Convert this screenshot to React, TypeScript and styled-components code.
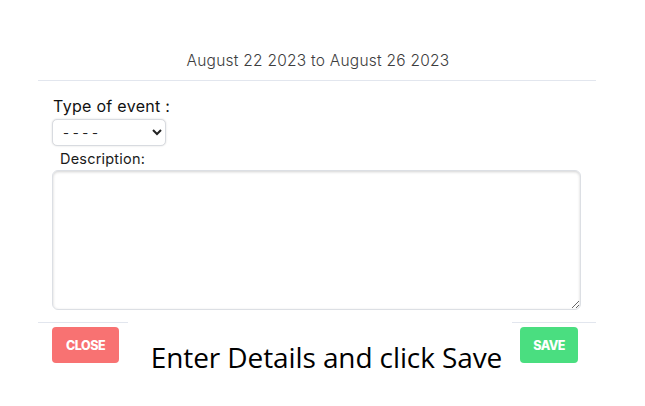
import React from 'react';
import styled, { createGlobalStyle } from 'styled-components';

const GlobalStyle = createGlobalStyle`
  html, body {
    margin: 0;
    padding: 0;
    background: #ffffff;
  }
  body {
    font-family: 'Poppins', 'Inter', 'Noto Sans', sans-serif;
  }
`;

function App() {
  return (
    <Page>
      <GlobalStyle />
      <Modal>
        <Header>August 22 2023 to August 26 2023</Header>
        <Body>
          <Label>Type of event :</Label>
          <Select defaultValue="">
            <option value="">- - - -</option>
            <option value="meeting">Meeting</option>
            <option value="holiday">Holiday</option>
          </Select>
          <SubLabel>Description:</SubLabel>
          <TextArea />
        </Body>
        <Footer>
          <Button $tone="close">Close</Button>
          <Button $tone="save">Save</Button>
          <Caption>Enter Details and click Save</Caption>
        </Footer>
      </Modal>
    </Page>
  );
}

export default App;

const Page = styled.div`
  width: 645px;
  height: 406px;
  padding-top: 40px;
  box-sizing: border-box;
  overflow: hidden;
`;

const Modal = styled.div`
  width: 558px;
  margin-left: 38px;
  display: flex;
  flex-direction: column;
`;

const Header = styled.div`
  height: 40px;
  display: flex;
  align-items: center;
  justify-content: center;
  padding-left: 2px;
  border-bottom: 1px solid #e2e6ee;
  font-family: 'Inter', sans-serif;
  font-weight: 300;
  font-size: 15.5px;
  letter-spacing: 0.25px;
  color: #3d3d3d;
`;

const Body = styled.div`
  display: flex;
  flex-direction: column;
  align-items: flex-start;
  padding: 14px 15px 12px 14px;
`;

const Label = styled.label`
  font-family: 'Inter', sans-serif;
  font-size: 16px;
  line-height: 23px;
  color: #111;
  padding-left: 1px;
  letter-spacing: 0.3px;
`;

const Select = styled.select`
  width: 114px;
  height: 27px;
  margin-top: 1px;
  border: 1px solid #d8dbe0;
  border-radius: 5px;
  box-shadow: 0 0 2px rgba(0, 0, 0, 0.15);
  background: #fff;
  font-family: 'Inter', sans-serif;
  font-size: 13px;
  color: #222;
  padding: 0 6px;
`;

const SubLabel = styled.label`
  font-family: 'Inter', sans-serif;
  font-size: 14.5px;
  line-height: 20px;
  color: #1a1a1a;
  margin-top: 3px;
  padding-left: 8px;
  letter-spacing: 0.2px;
`;

const TextArea = styled.textarea`
  width: 529px;
  height: 140px;
  margin-top: 1px;
  box-sizing: border-box;
  border: 1px solid #dcdfe4;
  border-radius: 6px;
  box-shadow: inset 0 1px 3px rgba(0, 0, 0, 0.18);
  outline: none;
  resize: both;
`;

const Footer = styled.div`
  position: relative;
  display: flex;
  justify-content: space-between;
  padding: 4px 18px 0 14px;
  border-top: 1px solid #e2e6ee;
  height: 48px;
`;

const Button = styled.button<{ $tone: 'close' | 'save' }>`
  height: 36px;
  padding: 0 ${(p) => (p.$tone === 'close' ? '14px' : '13px')};
  border: none;
  border-radius: 4px;
  background: ${(p) => (p.$tone === 'close' ? '#f87272' : '#4ade80')};
  color: #fff;
  font-family: 'Inter', sans-serif;
  font-weight: 800;
  font-size: 12.5px;
  text-transform: uppercase;
  letter-spacing: -0.5px;
`;

const Caption = styled.div`
  position: absolute;
  left: 90px;
  top: -6px;
  width: 384px;
  height: 90px;
  background: #fff;
  display: flex;
  justify-content: center;
  padding: 21px 0 0 13px;
  box-sizing: border-box;
  font-family: 'Open Sans', sans-serif;
  font-size: 28px;
  letter-spacing: -0.1px;
  color: #000;
`;
